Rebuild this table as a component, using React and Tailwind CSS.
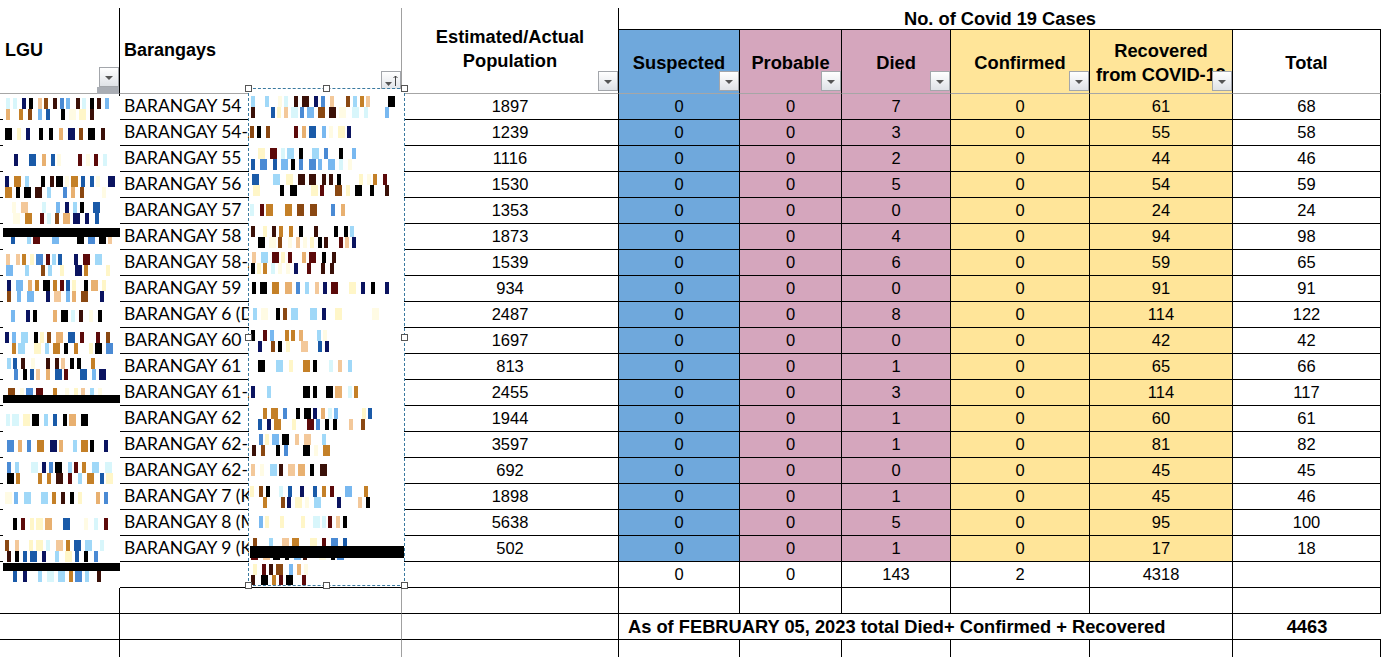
import { useMemo } from 'react';

const COLS = 'grid-cols-[120px_282px_217px_121px_102px_109px_139px_143px_148px]';

const rows = [
    ['BARANGAY 54', 1897, 7, 61, 68],
    ['BARANGAY 54-A', 1239, 3, 55, 58],
    ['BARANGAY 55', 1116, 2, 44, 46],
    ['BARANGAY 56', 1530, 5, 54, 59],
    ['BARANGAY 57', 1353, 0, 24, 24],
    ['BARANGAY 58', 1873, 4, 94, 98],
    ['BARANGAY 58-A', 1539, 6, 59, 65],
    ['BARANGAY 59', 934, 0, 91, 91],
    ['BARANGAY 6 (DAVID)', 2487, 8, 114, 122],
    ['BARANGAY 60', 1697, 0, 42, 42],
    ['BARANGAY 61', 813, 1, 65, 66],
    ['BARANGAY 61-A', 2455, 3, 114, 117],
    ['BARANGAY 62', 1944, 1, 60, 61],
    ['BARANGAY 62-A', 3597, 1, 81, 82],
    ['BARANGAY 62-B', 692, 0, 45, 45],
    ['BARANGAY 7 (KAMAGONG)', 1898, 1, 45, 46],
    ['BARANGAY 8 (MABINI)', 5638, 5, 95, 100],
    ['BARANGAY 9 (KALAW)', 502, 1, 17, 18],
];

const PAL = ['#000000', '#000000', '#5c0a0a', '#0b1460', '#78b8f0', '#4a8ad4', '#1a5aa8', '#fff6c8', '#d8f6fb', '#e8b070', '#c48028', '#8a4812', '#f3c89a', '#a0d8f8', '#3a1008', '#fffbe4'];

// scrambled picture strips, seeded so they stay put between renders
function makeNoise(seed, count, top, xFrom, xMin, xMax, density, twoBand) {
    let s = seed;
    const r = () => {
        s = (s * 16807) % 2147483647;
        return s / 2147483647;
    };
    const out = [];
    for (let i = 0; i < count; i++) {
        const rowTop = top + i * 26;
        const bands = r() < twoBand ? 2 : 1;
        const end = xMin + r() * (xMax - xMin);
        for (let b = 0; b < bands; b++) {
            const y = bands === 2 ? rowTop + 2 + b * 11 : rowTop + 6;
            const h = bands === 2 ? 11 : 12;
            let x = xFrom + Math.floor(r() * 4);
            while (x < end) {
                if (r() < density) {
                    const w = r() < 0.3 ? 7 : 4;
                    out.push({ x, y, w, h, c: PAL[Math.floor(r() * PAL.length)] });
                    x += w + 2 + Math.floor(r() * 5);
                } else {
                    x += 6;
                }
            }
        }
    }
    return out;
}

const FilterBtn = ({ sorted, className = 'right-0 bottom-[2px]' }) => (
    <div className={`absolute ${className} w-[20px] h-[20px] border border-[#a3a6ab] bg-linear-to-b from-white to-[#dfe2e7] flex items-center justify-center`}>
        {sorted ? (
            <svg width="18" height="18" viewBox="0 0 18 18">
                <path d="M3 10 L10 10 L6.5 14 Z" fill="#555" />
                <path d="M13.5 4 L13.5 14 M11.5 6 L13.5 4 L15.5 6" stroke="#444" strokeWidth="1" fill="none" />
            </svg>
        ) : (
            <div className="mt-[2px] w-0 h-0 border-l-[4px] border-r-[4px] border-t-[4px] border-l-transparent border-r-transparent border-t-[#555]" />
        )}
    </div>
);

const Num = ({ bg = 'bg-white', children, last }) => (
    <div className={`${bg} border-b border-black ${last ? 'border-r-0' : 'border-r'} flex items-center justify-center text-[16.5px]`}>
        {children}
    </div>
);

const App = () => {
    const lguBars = useMemo(() => makeNoise(7, 19, 0, 2, 96, 108, 0.78, 0.55), []);
    const picBars = useMemo(() => makeNoise(4242, 19, 5, 1, 60, 148, 0.7, 0.35), []);

    return (
        <div className="w-[1381px] h-[657px] overflow-hidden bg-white relative pt-2 font-['Liberation_Sans',Arial,sans-serif] text-black">
            <div className={`grid ${COLS} grid-rows-[22px_64px_repeat(22,26px)]`}>
                {/* headers */}
                <div className="row-span-2 relative border-r border-black border-b border-b-[#a6a6a6] flex items-center pl-[5px] font-bold text-[18px]">
                    LGU
                    <FilterBtn className="right-0 bottom-[6px]" />
                    <div className="absolute right-0 -bottom-px w-[22px] h-[7px] bg-[#a9adb4]" />
                </div>
                <div className="row-span-2 relative border-r border-[#a0a0a0] border-b border-b-[#a6a6a6] flex items-center pl-1 font-bold text-[18px]">
                    Barangays
                    <FilterBtn sorted />
                </div>
                <div className="row-span-2 relative border-r border-black border-b border-b-[#a6a6a6] flex items-center justify-center text-center font-bold text-[18.3px] leading-[24px] pb-1">
                    <div>Estimated/Actual<br />Population</div>
                    <FilterBtn />
                </div>
                <div className="col-span-6 border-b border-black flex items-center justify-center font-bold text-[18.3px]">
                    No. of Covid 19 Cases
                </div>
                {[
                    ['Suspected', 'bg-[#6fa8dc]'],
                    ['Probable', 'bg-[#d5a6bd]'],
                    ['Died', 'bg-[#d5a6bd]'],
                    ['Confirmed', 'bg-[#ffe599]'],
                    ['Recovered from COVID-19', 'bg-[#ffe599]'],
                    ['Total', 'bg-white'],
                ].map(([label, bg]) => (
                    <div key={label} className={`${bg} relative border-r border-black border-b border-b-[#a6a6a6] flex items-center justify-center text-center font-bold text-[18.3px] leading-[24px] overflow-hidden pt-[2px]`}>
                        {label === 'Recovered from COVID-19' ? (
                            <div className="whitespace-nowrap">Recovered<br />from COVID-19</div>
                        ) : (
                            label
                        )}
                        <FilterBtn className={label === 'Total' ? '-right-[24px] bottom-[2px]' : 'right-0 bottom-[2px]'} />
                    </div>
                ))}

                {/* data */}
                {rows.map(([name, pop, died, rec, total]) => (
                    <div key={name} className="contents">
                        <div className="border-r border-b border-black" />
                        <div className="border-r border-r-[#a0a0a0] border-b border-black pl-1 flex items-center overflow-hidden whitespace-nowrap font-['Lato',sans-serif] text-[17.5px]">
                            {name}
                        </div>
                        <Num>{pop}</Num>
                        <Num bg="bg-[#6fa8dc]">0</Num>
                        <Num bg="bg-[#d5a6bd]">0</Num>
                        <Num bg="bg-[#d5a6bd]">{died}</Num>
                        <Num bg="bg-[#ffe599]">0</Num>
                        <Num bg="bg-[#ffe599]">{rec}</Num>
                        <Num>{total}</Num>
                    </div>
                ))}

                {/* totals */}
                <div className="border-r border-black" />
                <div className="border-r border-r-[#a0a0a0] border-b border-black" />
                <Num />
                <Num>0</Num>
                <Num>0</Num>
                <Num>143</Num>
                <Num>2</Num>
                <Num>4318</Num>
                <Num />

                {/* blank */}
                <div className="border-r border-b border-black" />
                <div className="border-r border-r-[#a0a0a0] border-b border-black" />
                <Num />
                <Num />
                <Num />
                <Num />
                <Num />
                <Num />
                <Num />

                {/* as of */}
                <div className="border-r border-b border-black" />
                <div className="border-r border-r-[#a0a0a0] border-b border-black" />
                <Num />
                <div className="col-span-5 border-r border-b border-black flex items-center pl-[9px] font-bold text-[18.3px] whitespace-nowrap">
                    As of FEBRUARY 05, 2023 total Died+ Confirmed + Recovered
                </div>
                <div className="border-b border-black flex items-center justify-center font-bold text-[18.3px]">4463</div>

                {/* trailing */}
                <div className="border-r border-b border-black" />
                <div className="border-r border-r-[#a0a0a0] border-b border-black" />
                <Num />
                <Num />
                <Num />
                <Num />
                <Num />
                <Num />
                <Num />
            </div>

            {/* pixelated picture over the LGU column */}
            <svg className="absolute left-[3px] top-[96px]" width="117" height="492" viewBox="0 0 117 492">
                <rect width="117" height="492" fill="#fff" />
                {lguBars.map((b, i) => (
                    <rect key={i} x={b.x} y={b.y} width={b.w} height={b.h} fill={b.c} />
                ))}
                <rect x="0" y="132" width="117" height="9" fill="#000" />
                <rect x="0" y="299" width="117" height="8" fill="#000" />
                <rect x="0" y="467" width="117" height="8" fill="#000" />
            </svg>

            {/* selected picture over the barangay names */}
            <svg className="absolute left-[249px] top-[89px]" width="155" height="496" viewBox="0 0 155 496">
                <rect width="155" height="496" fill="#fff" />
                {picBars.map((b, i) => (
                    <rect key={i} x={b.x} y={b.y} width={b.w} height={b.h} fill={b.c} />
                ))}
                <rect x="1" y="457" width="154" height="12" fill="#000" />
            </svg>
            <div className="absolute left-[248px] top-[88px] w-[157px] h-[498px] border border-dashed border-[#3b7aa0]" />
            {[
                [248, 88], [326, 88], [404, 88],
                [248, 337], [404, 337],
                [248, 585], [326, 585], [404, 585],
            ].map(([x, y]) => (
                <div
                    key={`${x}-${y}`}
                    className="absolute w-[7px] h-[7px] bg-white border border-[#555]"
                    style={{ left: x - 3, top: y - 3 }}
                />
            ))}
        </div>
    );
};

export default App;
